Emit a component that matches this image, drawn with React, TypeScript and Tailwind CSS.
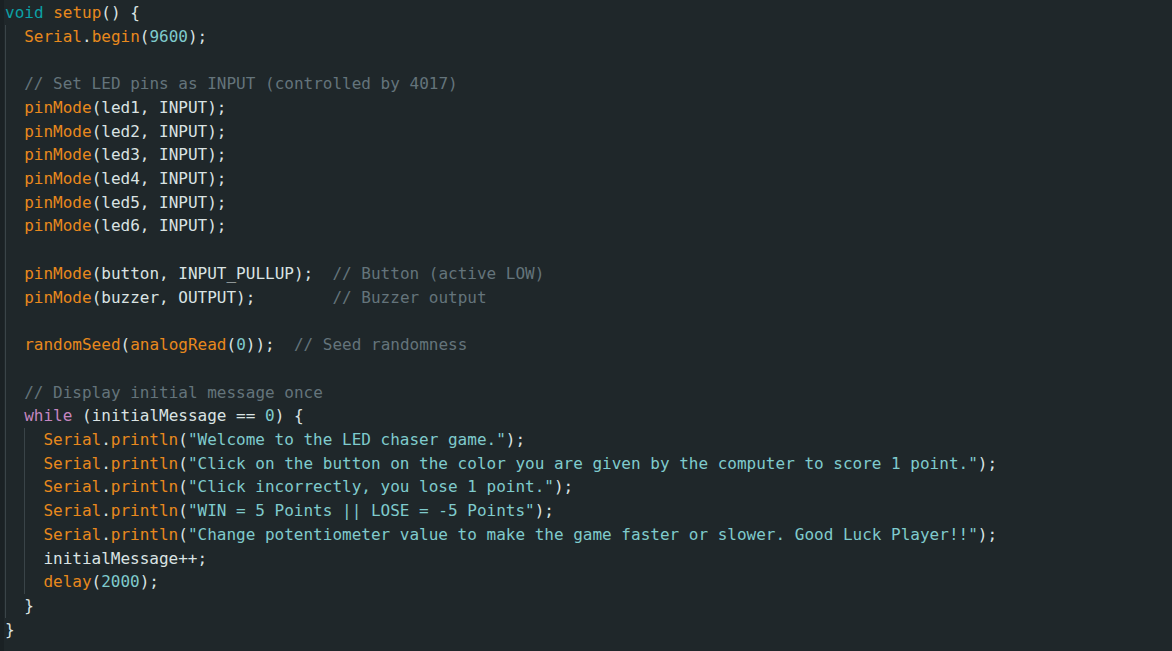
type Tok = [string, string]

const K = 'text-[#0ca1a6]'
const F = 'text-[#e8891d]'
const S = 'text-[#7fcbcd]'
const C = 'text-[#64747b]'
const P = 'text-[#c586c0]'
const D = 'text-[#dae3e3]'

function Line({ toks }: { toks: Tok[] }) {
  return (
    <div className="h-[23.73px] leading-[23.73px] whitespace-pre">
      {toks.length === 0 ? '\u00a0' : toks.map(([cls, txt], i) => <span key={i} className={cls}>{txt}</span>)}
    </div>
  )
}

const pin = (n: string, mode: string, pad = '', comment = ''): Tok[] => {
  const t: Tok[] = [[F, 'pinMode'], [D, `(${n}, ${mode});`]]
  if (comment) t.push([D, pad], [C, comment])
  return t
}

const println = (s: string): Tok[] => [[F, 'Serial'], [D, '.'], [F, 'println'], [D, '('], [S, `"${s}"`], [D, ');']]

export default function App() {
  const body: Tok[][] = [
    [[F, 'Serial'], [D, '.'], [F, 'begin'], [D, '('], [S, '9600'], [D, ');']],
    [],
    [[C, '// Set LED pins as INPUT (controlled by 4017)']],
    pin('led1', 'INPUT'),
    pin('led2', 'INPUT'),
    pin('led3', 'INPUT'),
    pin('led4', 'INPUT'),
    pin('led5', 'INPUT'),
    pin('led6', 'INPUT'),
    [],
    pin('button', 'INPUT_PULLUP', '  ', '// Button (active LOW)'),
    pin('buzzer', 'OUTPUT', '        ', '// Buzzer output'),
    [],
    [[F, 'randomSeed'], [D, '('], [F, 'analogRead'], [D, '('], [S, '0'], [D, '));  '], [C, '// Seed randomness']],
    [],
    [[C, '// Display initial message once']],
    [[P, 'while'], [D, ' (initialMessage == '], [S, '0'], [D, ') {']],
  ]
  const inner: Tok[][] = [
    println('Welcome to the LED chaser game.'),
    println('Click on the button on the color you are given by the computer to score 1 point.'),
    println('Click incorrectly, you lose 1 point.'),
    println('WIN = 5 Points || LOSE = -5 Points'),
    println('Change potentiometer value to make the game faster or slower. Good Luck Player!!'),
    [[D, 'initialMessage++;']],
    [[F, 'delay'], [D, '('], [S, '2000'], [D, ');']],
  ]

  return (
    <div className="w-[1172px] h-[651px] overflow-hidden bg-[#1f272a] flex text-[16px] font-['DejaVu_Sans_Mono','Liberation_Mono',monospace] text-[#dae3e3]">
      <div className="w-[4px] bg-[#1a2124] shrink-0" />
      <div className="pl-[1px] pt-[1px]">
        <Line toks={[[K, 'void'], [D, ' '], [F, 'setup'], [D, '() {']]} />
        <div className="border-l border-[#3a4448] pl-[18.2px]">
          {body.map((t, i) => <Line key={i} toks={t} />)}
          <div className="border-l border-[#3a4448] pl-[18.2px]">
            {inner.map((t, i) => <Line key={i} toks={t} />)}
          </div>
          <Line toks={[[D, '}']]} />
        </div>
        <Line toks={[[D, '}']]} />
      </div>
    </div>
  )
}
